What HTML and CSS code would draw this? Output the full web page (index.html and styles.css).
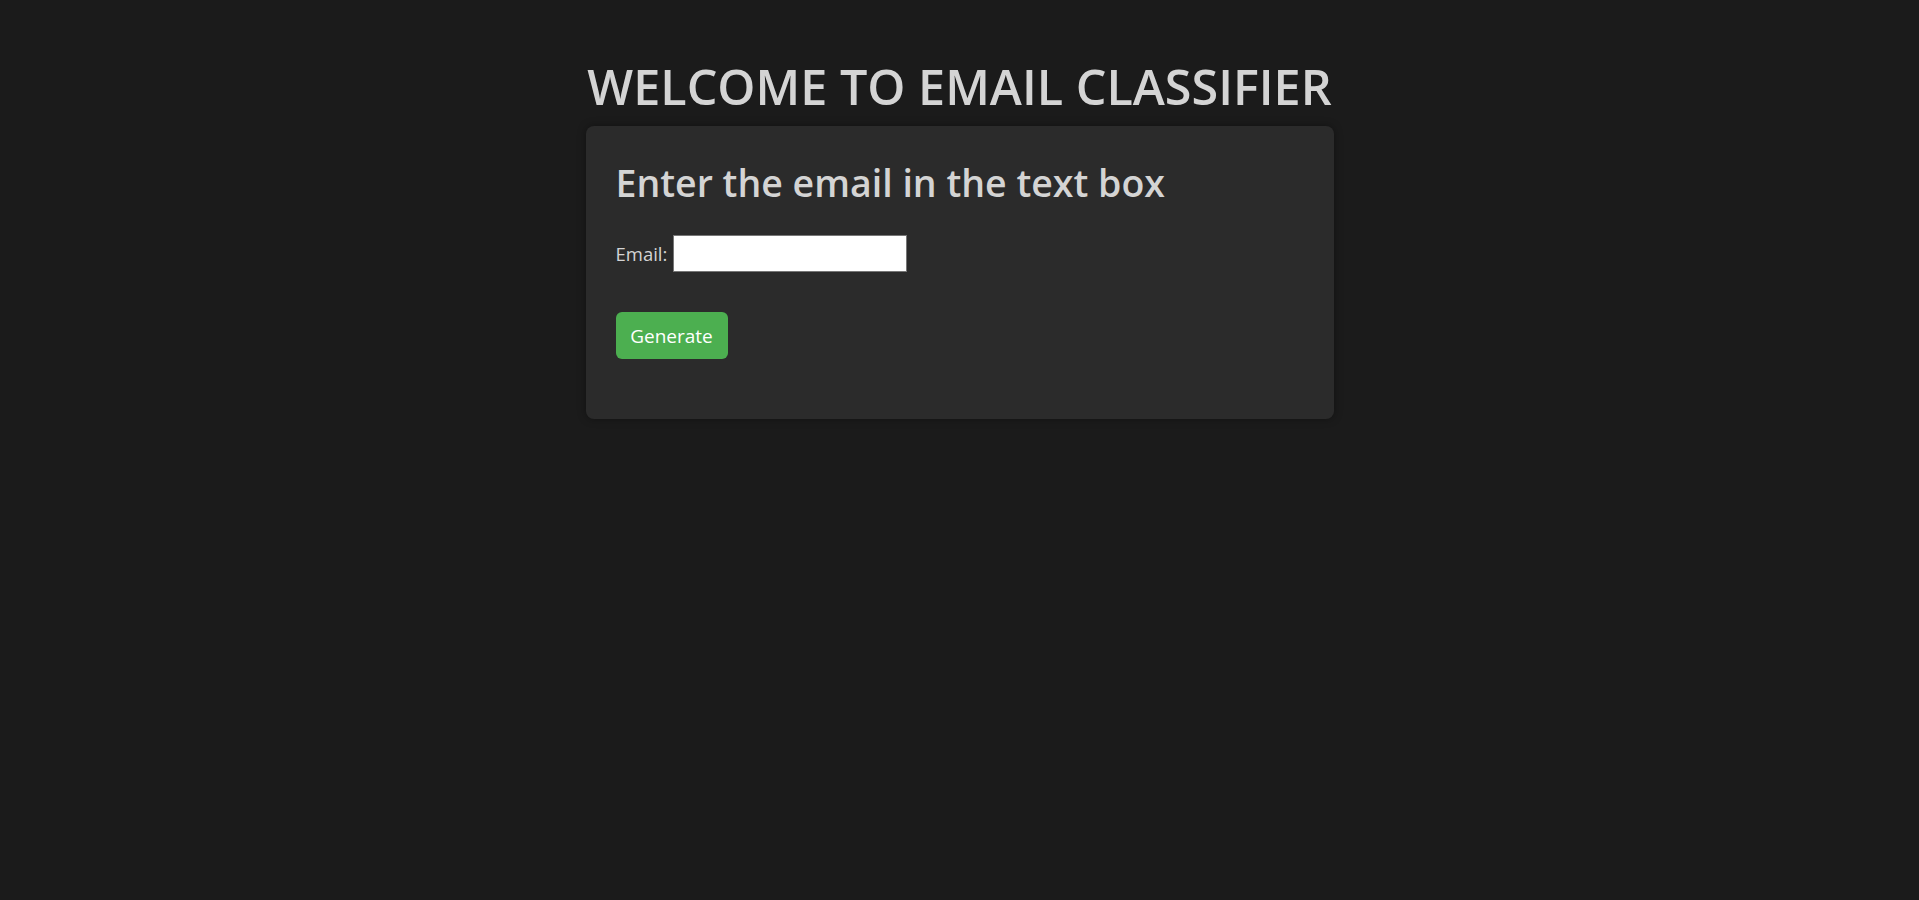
FILE: index.html
```html
<!DOCTYPE html>
<html lang="en">
<head>
<meta charset="utf-8">
<title>Email Classifier</title>
<link rel="stylesheet" href="styles.css">
</head>
<body>
<main class="page">
  <h1 class="title">WELCOME TO EMAIL CLASSIFIER</h1>
  <section class="card">
    <h2 class="card-title">Enter the email in the text box</h2>
    <form class="form">
      <div class="field">
        <label class="label" for="email">Email:</label>
        <input class="input" type="text" id="email" name="email">
      </div>
      <button class="btn" type="button">Generate</button>
    </form>
  </section>
</main>
</body>
</html>
```

FILE: styles.css
```css
html, body {
  margin: 0;
  padding: 0;
  background: #1b1b1b;
}
body {
  font-family: "Open Sans", "Noto Sans", sans-serif;
  color: #d4d4d4;
  min-height: 900px;
}
.page {
  display: flex;
  flex-direction: column;
  align-items: center;
  padding-top: 58px;
}
.title {
  margin: 0;
  font-size: 48.5px;
  line-height: 56px;
  font-weight: 600;
  color: #d4d4d4;
}
.card {
  box-sizing: border-box;
  width: 748px;
  margin-top: 12px;
  padding: 34px 30px 60px 30px;
  background: #2b2b2b;
  border-radius: 8px;
  box-shadow: 0 0 8px rgba(0, 0, 0, 0.35);
}
.card-title {
  margin: 0;
  font-size: 37.5px;
  line-height: 46px;
  font-weight: 600;
  color: #d4d4d4;
}
.form {
  display: flex;
  flex-direction: column;
  align-items: flex-start;
  gap: 40px;
  margin-top: 29px;
}
.field {
  display: flex;
  align-items: center;
  gap: 6px;
}
.label {
  font-size: 18.5px;
  color: #d4d4d4;
}
.input {
  box-sizing: border-box;
  width: 234px;
  height: 37px;
  margin: 0;
  border: 1px solid #767676;
  border-radius: 0;
  background: #ffffff;
  padding: 2px 4px;
  font-size: 16px;
}
.btn {
  box-sizing: border-box;
  width: 112px;
  height: 47px;
  border: none;
  border-radius: 6px;
  background: #4caf50;
  color: #ffffff;
  font-family: "Open Sans", "Noto Sans", sans-serif;
  font-size: 19px;
  padding: 0 12px;
  cursor: pointer;
}
```
